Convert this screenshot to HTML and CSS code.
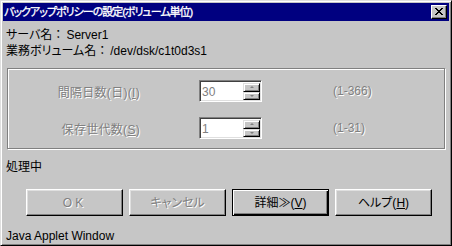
FILE: index.html
```html
<!DOCTYPE html>
<html lang="ja">

<head>
    <meta charset="UTF-8">
    <title>バックアップポリシーの設定(ボリューム単位)</title>
    <link rel="stylesheet" href="styles.css">
</head>

<body>
    <div class="window">
        <div class="titlebar">
            <span class="title">バックアップポリシーの設定(ボリューム単位)</span>
            <span class="close">
                <svg width="8" height="7" viewBox="0 0 8 7">
                    <path d="M0 0h2v1h1v1h2V1h1V0h2v1H7v1H6v1H5v1h1v1h1v1h1v1H6V6H5V5H3v1H2v1H0V6h1V5h1V4h1V3H2V2H1V1H0z" fill="#000"/>
                </svg>
            </span>
        </div>
        <div class="content">
            <div class="info">サーバ名<span class="colon">：</span>Server1</div>
            <div class="info">業務ボリューム名<span class="colon">：</span>/dev/dsk/c1t0d3s1</div>

            <div class="group">
                <div class="row">
                    <span class="label disabled">間隔日数(日)(<u>I</u>)</span>
                    <div class="spin">
                        <span class="field">30</span>
                        <div class="arrows">
                            <span class="arrow"><i class="tri up"></i></span>
                            <span class="arrow"><i class="tri down"></i></span>
                        </div>
                    </div>
                    <span class="range disabled">(1-366)</span>
                </div>
                <div class="row">
                    <span class="label disabled">保存世代数(<u>S</u>)</span>
                    <div class="spin">
                        <span class="field">1</span>
                        <div class="arrows">
                            <span class="arrow"><i class="tri up"></i></span>
                            <span class="arrow"><i class="tri down"></i></span>
                        </div>
                    </div>
                    <span class="range disabled">(1-31)</span>
                </div>
            </div>

            <div class="status">処理中</div>

            <div class="buttons">
                <span class="btn disabled ok">OK</span>
                <span class="btn disabled">キャンセル</span>
                <span class="btn default">詳細≫(<u>V</u>)</span>
                <span class="btn">ヘルプ(<u>H</u>)</span>
            </div>

            <div class="footer">Java Applet Window</div>
        </div>
    </div>
</body>

</html>
```

FILE: styles.css
```css
* {
    margin: 0;
    padding: 0;
    box-sizing: border-box;
}

body {
    width: 452px;
    height: 246px;
    background: #c6c6c6;
    font-family: "Liberation Sans", "Noto Sans CJK JP", sans-serif;
    font-size: 12px;
    font-feature-settings: "palt";
    color: #000;
    overflow: hidden;
}

.window {
    width: 452px;
    height: 246px;
    padding: 2px;
    border: 1px solid;
    border-color: #dfdfdf #000 #000 #dfdfdf;
    box-shadow: inset 1px 1px #fff, inset -1px -1px #808080;
    background: #c6c6c6;
}

.titlebar {
    height: 18px;
    background: #000080;
    color: #fff;
    display: flex;
    align-items: center;
    justify-content: space-between;
    padding: 0 2px 0 1px;
}

.title {
    font-size: 11px;
    line-height: 16px;
    letter-spacing: -1px;
    -webkit-text-stroke: 0.3px #fff;
}

.close {
    width: 16px;
    height: 14px;
    background: #c6c6c6;
    border: 1px solid;
    border-color: #fff #000 #000 #fff;
    box-shadow: inset -1px -1px #808080;
    display: flex;
    align-items: center;
    justify-content: center;
    padding: 0 1px 1px 0;
}

.close svg {
    display: block;
}

.content {
    padding: 6px 2px 0 3px;
}

.info {
    line-height: 16px;
}

.colon {
    font-feature-settings: normal;
    margin-right: 2px;
}

.group {
    margin: 9px 2px 0 1px;
    height: 81px;
    border: 1px solid #808080;
    box-shadow: inset 1px 1px #fff, 1px 1px #fff;
    padding: 11px 0 0 0;
    display: flex;
    flex-direction: column;
    gap: 15px;
}

.row {
    display: flex;
    align-items: center;
    height: 22px;
}

.label {
    width: 132px;
    text-align: right;
    letter-spacing: 0.3px;
}

.disabled {
    color: #808080;
    text-shadow: 1px 1px 0 #fff;
}

.spin {
    margin-left: 59px;
    width: 63px;
    height: 22px;
    background: #fff;
    border: 1px solid;
    border-color: #808080 #fff #fff #808080;
    box-shadow: inset 1px 1px #404040, inset -1px -1px #dfdfdf;
    display: flex;
    justify-content: space-between;
    padding: 2px 1px 1px 2px;
}

.field {
    color: #808080;
    line-height: 18px;
}

.arrows {
    width: 17px;
    display: flex;
    flex-direction: column;
}

.arrow {
    flex: 1;
    background: #c6c6c6;
    border: 1px solid;
    border-color: #dfdfdf #000 #000 #dfdfdf;
    box-shadow: inset 1px 1px #fff, inset -1px -1px #808080;
    display: flex;
    align-items: center;
    justify-content: center;
}

.tri {
    width: 0;
    height: 0;
    border-left: 2px solid transparent;
    border-right: 2px solid transparent;
}

.tri.up {
    border-bottom: 2px solid #808080;
}

.tri.down {
    border-top: 2px solid #808080;
}

.range {
    margin-left: 71px;
}

.status {
    margin-top: 10px;
    line-height: 16px;
}

.buttons {
    margin-top: 14px;
    padding-left: 20px;
    display: flex;
    gap: 6px;
}

.btn {
    width: 97px;
    height: 27px;
    border: 1px solid;
    border-color: #fff #000 #000 #fff;
    box-shadow: inset -1px -1px #808080, inset 1px 1px #dfdfdf;
    display: flex;
    align-items: center;
    justify-content: center;
    line-height: 16px;
}

.btn.ok {
    letter-spacing: 3px;
}

.btn.default {
    border: 1px solid #000;
    box-shadow: inset 1px 1px #fff, inset -1px -1px #000, inset -2px -2px #808080;
}

.footer {
    margin-top: 12px;
    line-height: 16px;
}
```
